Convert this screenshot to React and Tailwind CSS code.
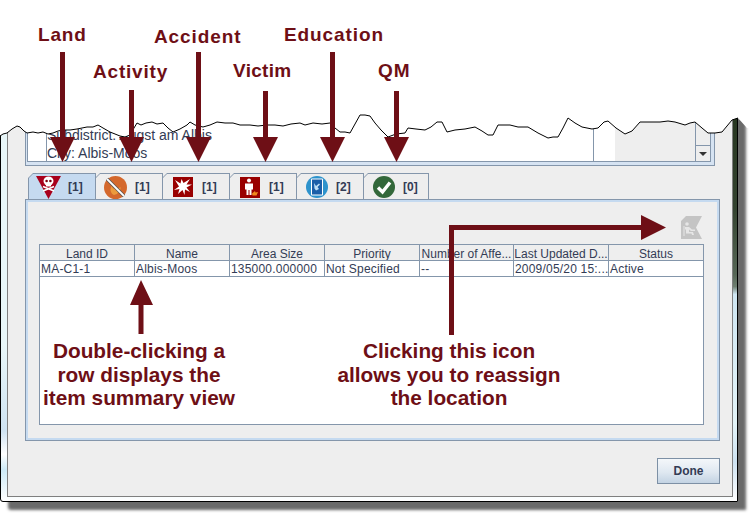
import React from 'react'

const tornEdge = [
  [0, 136], [3, 134], [7, 133], [12, 129], [17, 126], [20, 127], [24, 131], [27, 133], [33, 132], [38, 133], [43, 132], [48, 134], [53, 133], [58, 131], [63, 130], [70, 130], [77, 129], [82, 128], [87, 127], [93, 127], [98, 125], [103, 128], [110, 132], [115, 134], [120, 136], [125, 137], [130, 135], [134, 128], [137, 123], [141, 125], [146, 123], [152, 122], [157, 124], [163, 123], [168, 128], [173, 132], [180, 129], [187, 125], [190, 122], [195, 125], [203, 127], [210, 125], [217, 122], [225, 123], [233, 123], [240, 125], [250, 125], [258, 126], [267, 125], [275, 125], [283, 126], [291, 124], [300, 123], [305, 125], [313, 123], [322, 124], [330, 123], [335, 128], [340, 132], [345, 132], [350, 133], [355, 124], [360, 115], [365, 115], [370, 116], [375, 123], [381, 130], [388, 137], [396, 134], [405, 133], [408, 128], [416, 129], [425, 130], [431, 127], [437, 122], [442, 122], [447, 132], [455, 130], [465, 129], [475, 127], [482, 131], [488, 135], [493, 135], [498, 125], [510, 125], [518, 127], [528, 127], [538, 133], [548, 138], [553, 137], [558, 137], [563, 128], [568, 118], [575, 123], [582, 127], [592, 129], [598, 128], [604, 122], [608, 121], [616, 128], [625, 134], [632, 131], [640, 122], [650, 122], [660, 122], [668, 121], [675, 122], [685, 125], [690, 123], [695, 122], [702, 128], [708, 133], [715, 133], [722, 132], [727, 126], [732, 120], [738, 118],
]
const tornLine = tornEdge.map((p) => p.join(',')).join(' ')

const tabs = [
  { icon: <SkullIcon />, count: '[1]', active: true },
  { icon: <NoFireIcon />, count: '[1]' },
  { icon: <BlastIcon />, count: '[1]' },
  { icon: <VictimIcon />, count: '[1]' },
  { icon: <CardIcon />, count: '[2]' },
  { icon: <CheckIcon />, count: '[0]' },
]

const columns = ['Land ID', 'Name', 'Area Size', 'Priority', 'Number of Affe...', 'Last Updated D...', 'Status']
const row = ['MA-C1-1', 'Albis-Moos', '135000.000000', 'Not Specified', '--', '2009/05/20 15:...', 'Active']

const labels = [
  { text: 'Land', cls: 'left-[38px] top-[24px] tracking-[0.8px]' },
  { text: 'Activity', cls: 'left-[93px] top-[61px] tracking-[0.8px]' },
  { text: 'Accident', cls: 'left-[154px] top-[26px] tracking-[0.9px]' },
  { text: 'Victim', cls: 'left-[233px] top-[60px] tracking-[0.3px]' },
  { text: 'Education', cls: 'left-[284px] top-[24px] tracking-[0.9px]' },
  { text: 'QM', cls: 'left-[378px] top-[60px] tracking-[1px]' },
]

function SkullIcon() {
  return (
    <svg width="25" height="23" viewBox="0 0 25 23">
      <path d="M0 0H25L12.500 23Z" fill="#a8001c" />
      <ellipse cx="12.500" cy="5" rx="5" ry="4.500" fill="#fff" />
      <rect x="10" y="8" width="5" height="2.500" fill="#fff" />
      <circle cx="10.600" cy="5" r="1.300" fill="#7a0010" />
      <circle cx="14.400" cy="5" r="1.300" fill="#7a0010" />
      <path d="M7 10.500L18 15M18 10.500L7 15" stroke="#fff" strokeWidth="1.600" />
    </svg>
  )
}

function NoFireIcon() {
  return (
    <svg width="23" height="23" viewBox="0 0 23 23">
      <circle cx="11.500" cy="11.500" r="11.500" fill="#d4682c" />
      <path d="M10 19C6 17 6 13 7.500 10L9.500 13L11 9L13.500 13L16.500 11C17 15 14 18 10 19Z" fill="#ec9a3c" />
      <path d="M3 3L20 20" stroke="#555" strokeWidth="3.200" />
      <path d="M3 3L20 20" stroke="#fff" strokeWidth="1.800" />
    </svg>
  )
}

function BlastIcon() {
  return (
    <svg width="20" height="20" viewBox="0 0 20 20">
      <rect width="20" height="20" fill="#990000" />
      <path d="M2 3L7.500 6.500L8.500 2L10.500 6L17 2L13.500 7.500L19 7.500L13.500 10.500L17 15L12 12.500L11.500 18L9.500 13L5 17L6.500 12L1 13L6 9.500Z" fill="#fff" />
    </svg>
  )
}

function VictimIcon() {
  return (
    <svg width="20" height="21" viewBox="0 0 20 21">
      <rect width="20" height="21" fill="#990000" />
      <circle cx="9" cy="3.500" r="2" fill="#fff" />
      <path d="M5 6.500H13V12.500H11.500V18H9.500V13H8.500V18H6.500V12.500H5Z" fill="#fff" />
      <path d="M12 16.500L15 14L15.500 15.500L18 15L16.500 18.500H12.500Z" fill="#f08a1c" />
    </svg>
  )
}

function CardIcon() {
  return (
    <svg width="22" height="22" viewBox="0 0 22 22">
      <circle cx="11" cy="11" r="11" fill="#2e93cc" />
      <rect x="5" y="2.500" width="12" height="17" rx="1" fill="#fff" />
      <rect x="6" y="3.500" width="10" height="15" fill="#1b5fa8" />
      <path d="M8 7L10 10L13 7.500L14 8.500L11.500 11L13 13L10 14.500L8.500 12.500Z" fill="#bfe0f5" />
    </svg>
  )
}

function CheckIcon() {
  return (
    <svg width="22" height="22" viewBox="0 0 22 22">
      <circle cx="11" cy="11" r="11" fill="#33683a" />
      <path d="M5 11.500L9.500 16L17 6.500" fill="none" stroke="#fff" strokeWidth="3.400" />
    </svg>
  )
}

function ReassignIcon() {
  return (
    <svg width="21" height="23" viewBox="0 0 21 23">
      <path d="M5 0H21L15 11.500L21 23H0V5Z" fill="#c4c4c4" />
      <circle cx="6" cy="8" r="1.800" fill="#e6e6e6" />
      <path d="M4 11H8L11 13.500H14V15H10L8 13.500V16H12L13 19H11L10.500 17.500H5V13.500H4Z" fill="#e6e6e6" />
      <path d="M3 10V20" stroke="#e6e6e6" />
    </svg>
  )
}

function Tab({ icon, count, active }) {
  return (
    <div className="-mr-px h-[26px] w-[68px] bg-[#8496ab] [clip-path:polygon(5px_0,100%_0,100%_100%,0_100%,0_5px)] last:w-[66px]">
      <div className={`ml-px mr-px mt-px flex h-[26px] items-center [clip-path:polygon(4px_0,100%_0,100%_100%,0_100%,0_4px)] ${active ? 'bg-[#c5daf0]' : 'bg-[#eeeeee]'}`}>
        <div className="flex w-[39px] items-center justify-center">{icon}</div>
        <span className="text-[12px] font-bold text-[#333c55]">{count}</span>
      </div>
    </div>
  )
}

function Arrows() {
  const color = '#6e0f16'
  return (
    <svg className="absolute left-0 top-0" width="755" height="519" viewBox="0 0 755 519">
      <g fill={color}>
        <path d="M60 52H65V137H75L62.500 162L50 137H60Z" />
        <path d="M129 90H134V137H144L131.500 162L119 137H129Z" />
        <path d="M196 52H201V137H211L198.500 162L186 137H196Z" />
        <path d="M263 91H268V137H278L265.500 162L253 137H263Z" />
        <path d="M330 52H335V137H345L332.500 162L320 137H330Z" />
        <path d="M394 91H399V137H409L396.500 162L384 137H394Z" />
        <path d="M138.500 334V305H130L141 280L153 305H143.500V334Z" />
        <path d="M449 335V225H641V215L666 227.500L641 240V230H454V335Z" />
      </g>
    </svg>
  )
}

export default function App() {
  return (
    <div className="relative h-[519px] w-[755px] overflow-hidden bg-white font-['Liberation_Sans',Arial,sans-serif]">
      {/* dialog window, top part is hidden behind the torn edge */}
      <div className="pt-[110px]">
        <div className="flex h-[392px] w-[738px] rounded-bl-[3px] border border-black bg-[linear-gradient(180deg,#e8f6f8_0%,#e8f6f8_60%,#cfe3f2_82%,#ffffff_88%,#cdeaf7_92%,#ffffff_100%)] pl-[6px] shadow-[8px_8px_3px_#6a6a6a]">
          <div className="h-[386px] w-[726px] shrink-0 border border-[#7f7f7f] bg-[#eeeeee] pl-[17px] pr-[12px]">
            {/* location list */}
            <div className="mr-[5px] h-[54px] border-x border-b border-[#8496ab] bg-[#d6e3f2] pb-[3px] pl-[1px] pr-[3px]">
              <div className="flex h-[50px] border-x border-b border-[#8496ab] bg-white">
                <div className="w-[19px] shrink-0 border-r border-[#8496ab]" />
                <div className="flex-1 text-[14px] leading-[18px] text-[#333c55]">
                  <div className="pt-[14px]">Subdistrict: Augst am Albis</div>
                  <div>City: Albis-Moos</div>
                </div>
                <div className="w-[22px] shrink-0 border-l border-[#8496ab]" />
                <div className="w-[80px] shrink-0 bg-[#eeeeee]" />
                <div className="flex w-[15px] shrink-0 flex-col justify-end border-l border-[#8496ab] bg-[#eeeeee]">
                  <div className="flex h-[16px] items-center justify-center border-t border-[#8496ab]">
                    <div className="h-0 w-0 border-x-[4px] border-t-[4px] border-x-transparent border-t-[#333333]" />
                  </div>
                </div>
              </div>
            </div>

            {/* tabs */}
            <div className="ml-[3px] mt-[7px] flex h-[26px]">
              {tabs.map((t, i) => (
                <Tab key={i} icon={t.icon} count={t.count} active={t.active} />
              ))}
            </div>

            {/* tab panel */}
            <div className="h-[242px] border border-[#8496ab] bg-[#c5daf0] p-[2px]">
              <div className="h-full bg-[#eeeeee] pl-[11px] pr-[13px]">
                <div className="flex h-[42px] items-start justify-end pr-[2px] pt-[14px]">
                  <ReassignIcon />
                </div>
                <div className="h-[181px] border border-[#8496ab] bg-white">
                  <div className="grid grid-cols-[95px_95px_95px_95px_94px_95px_94px] border-b border-[#8496ab] bg-[#eeeeee]">
                    {columns.map((c) => (
                      <div key={c} className="h-[15px] overflow-hidden whitespace-nowrap border-r border-[#8496ab] text-center text-[12px] leading-[18px] text-[#333c55] last:border-r-0">{c}</div>
                    ))}
                  </div>
                  <div className="grid grid-cols-[95px_95px_95px_95px_94px_95px_94px] border-b border-[#8496ab]">
                    {row.map((c) => (
                      <div key={c} className="h-[15px] overflow-hidden whitespace-nowrap border-r border-[#8496ab] pl-[1px] text-[12px] leading-[16px] tracking-[0.2px] text-[#333c55] last:border-r-0">{c}</div>
                    ))}
                  </div>
                </div>
              </div>
            </div>

            <div className="mt-[17px] flex justify-end">
              <button className="h-[26px] w-[63px] border border-[#7d90a5] bg-[linear-gradient(180deg,#f4f7fa,#dfe8f1_55%,#c3d3e3)] text-[12px] font-bold text-[#333c55]">Done</button>
            </div>
          </div>
          {/* right glass edge picks up a dark backdrop in the upper part */}
          <div className="w-[4px] shrink-0 bg-[linear-gradient(180deg,#26351f_0%,#33422f_25%,#566656_42%,#6e7e70_45%,#cfe6f2_47%,#e4f4f8_80%,#cfe3f2_90%,#ffffff_100%)]" />
        </div>
      </div>

      {/* torn paper effect over the top of the window */}
      <svg className="absolute left-0 top-0" width="755" height="160" viewBox="0 0 755 160">
        <polygon points={`0,0 ${tornLine} 747,128 755,128 755,0`} fill="#fff" />
        <polyline points={tornLine} fill="none" stroke="#000" strokeWidth="1" />
      </svg>

      <Arrows />

      {/* callout labels */}
      {labels.map((l) => (
        <div key={l.text} className={`absolute ${l.cls} text-[19px] font-bold leading-[22px] text-[#6e0f16]`}>{l.text}</div>
      ))}
      <div className="absolute left-[39px] top-[339px] w-[200px] text-center text-[20.8px] font-bold leading-[23.5px] text-[#6e0f16]">
        Double-clicking a<br />row displays the<br />item summary view
      </div>
      <div className="absolute left-[329px] top-[339px] w-[240px] text-center text-[20.8px] font-bold leading-[23.5px] text-[#6e0f16]">
        Clicking this icon<br />allows you to reassign<br />the location
      </div>
    </div>
  )
}
